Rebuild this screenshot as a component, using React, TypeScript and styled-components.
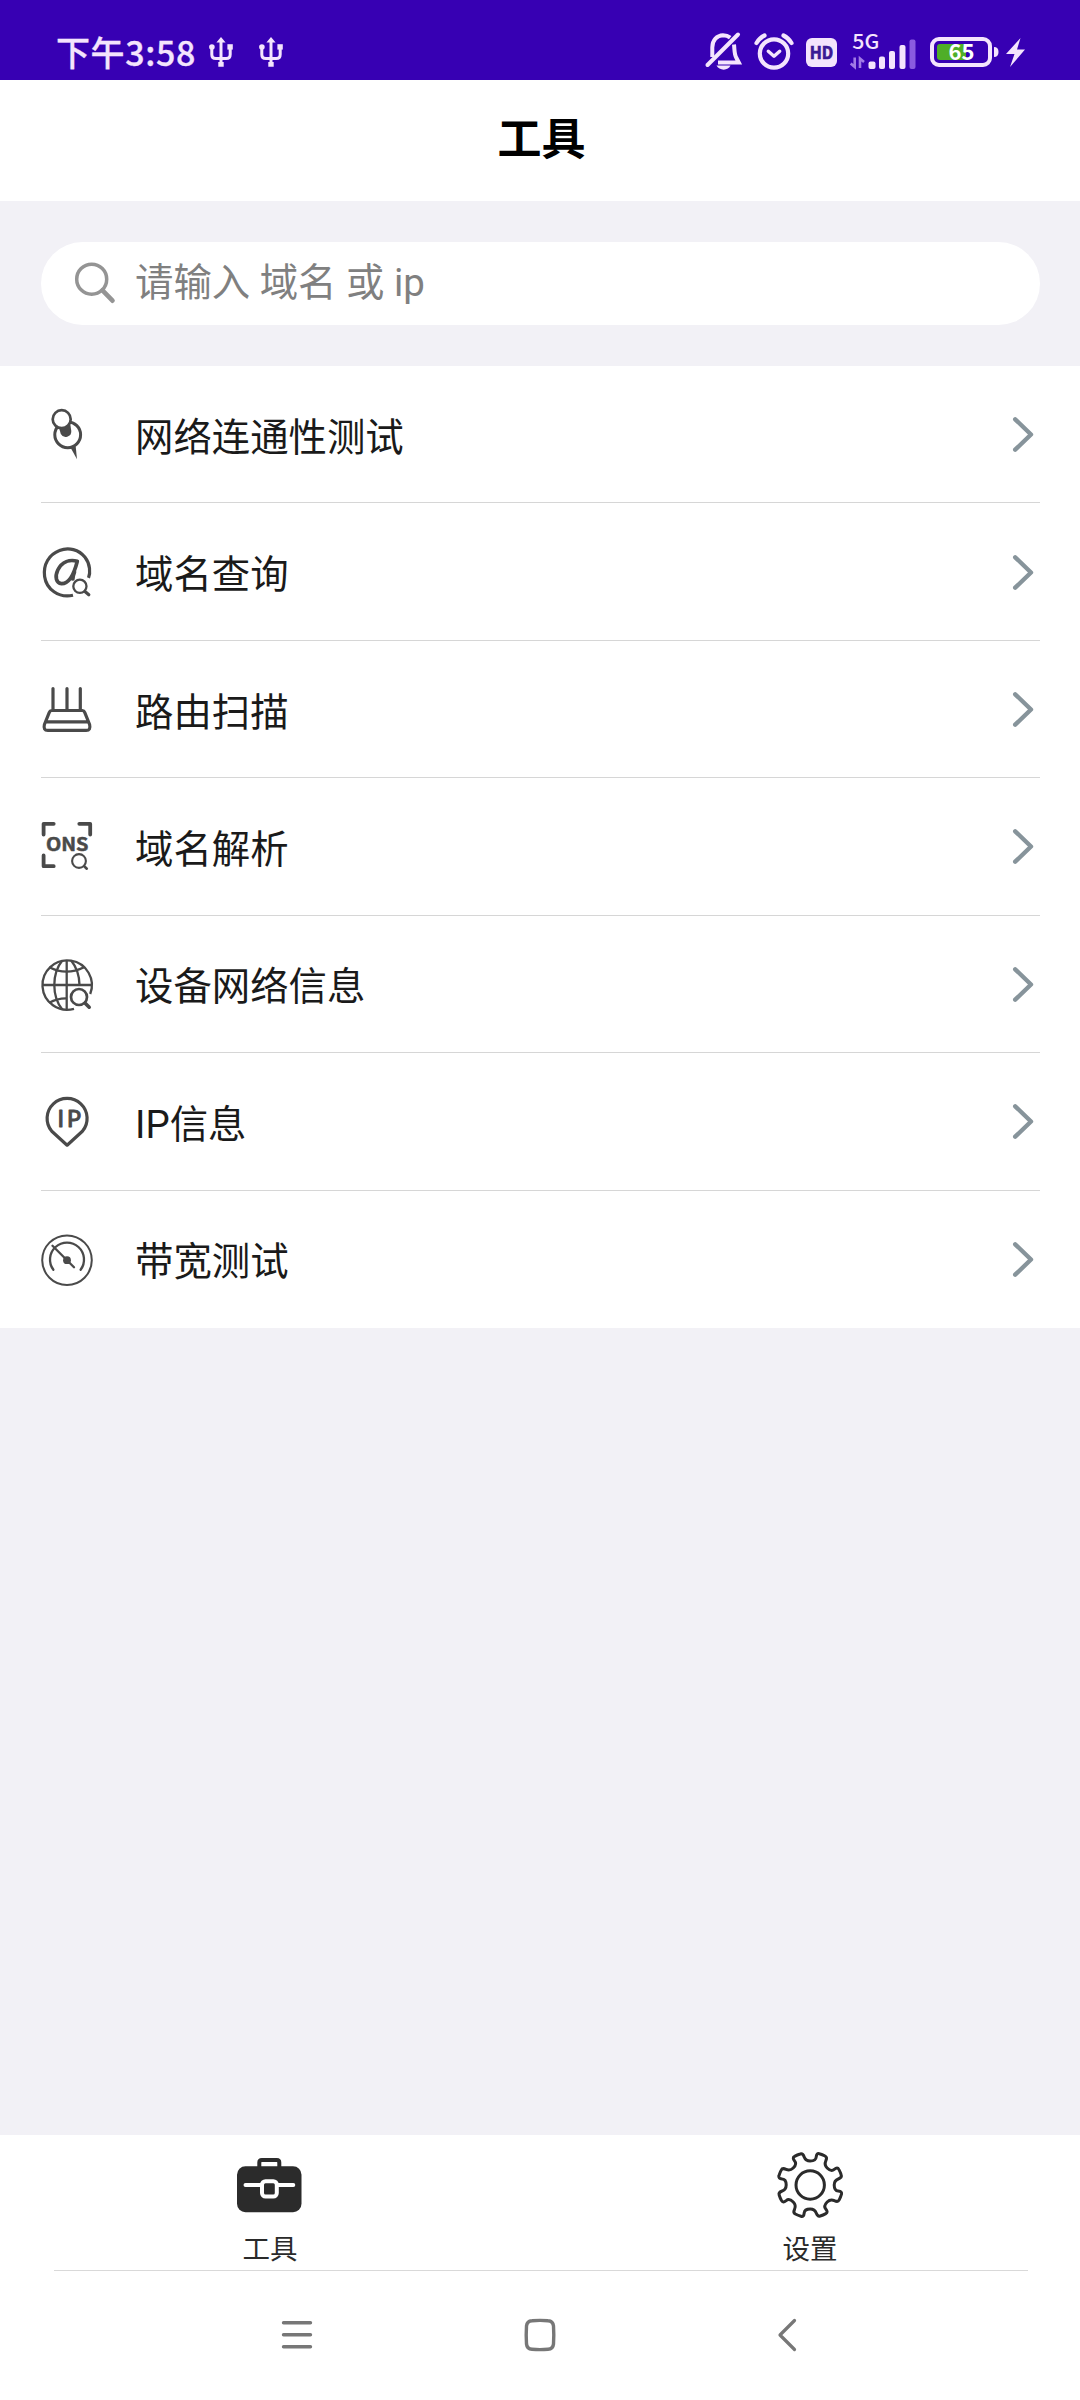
import React from "react";
import styled, { createGlobalStyle } from "styled-components";

const GlobalStyle = createGlobalStyle`
  * { box-sizing: border-box; }
  body { margin: 0; background: #f2f1f6; }
  svg { display: block; overflow: visible; flex: none; }
`;

const FONT = `"Noto Sans CJK SC", sans-serif`;
const BODY_FONT = `Roboto, "Noto Sans CJK SC", sans-serif`;
const INK = "#4a4a4a";
const STATUS_INK = "#f4e4fd";

const Screen = styled.div`
  width: 1080px;
  height: 2400px;
  display: flex;
  flex-direction: column;
  background: #f2f1f6;
  font-family: ${FONT};
  color: #1a1a1a;
`;

const StatusBar = styled.header`
  height: 80px;
  flex: none;
  display: flex;
  justify-content: space-between;
  align-items: flex-start;
  padding: 32px 55px 0 56px;
  background: #3700b3;
  color: ${STATUS_INK};
`;

const StatusGroup = styled.div`
  display: flex;
  align-items: center;
  height: 40px;
`;

const Clock = styled.span`
  font-size: 34px;
  font-weight: 500;
  line-height: 40px;
  letter-spacing: 0.6px;
  -webkit-text-stroke: 0.3px ${STATUS_INK};
  width: 153px;
  white-space: nowrap;
`;

const StatusItem = styled.span<{ $before?: number }>`
  display: block;
  margin-left: ${(p) => p.$before ?? 0}px;
`;

const TitleBar = styled.div`
  height: 121px;
  flex: none;
  display: flex;
  align-items: center;
  justify-content: center;
  padding: 0 0 9px 3px;
  background: #fff;
`;

const Title = styled.h1`
  margin: 0;
  font-size: 44px;
  font-weight: 700;
  line-height: 60px;
  color: #000;
`;

const SearchArea = styled.div`
  height: 165px;
  flex: none;
  padding: 41px 40px 0 41px;
`;

const SearchBox = styled.label`
  height: 83px;
  display: flex;
  align-items: center;
  border-radius: 42px;
  background: #fff;
  padding-left: 34px;
`;

const SearchInput = styled.input`
  flex: 1;
  height: 60px;
  margin: 0 40px 2px 20px;
  padding: 0;
  border: 0;
  outline: 0;
  background: transparent;
  font: 400 38.4px/60px ${BODY_FONT};
  color: #1a1a1a;
  &::placeholder {
    color: #808080;
    opacity: 1;
  }
`;

const List = styled.ul`
  list-style: none;
  margin: 0;
  padding: 0 40px 0 41px;
  height: 962px;
  flex: none;
  display: grid;
  grid-template-rows: repeat(7, 1fr);
  background: #fff;
`;

const Row = styled.li`
  display: flex;
  align-items: center;
  border-bottom: 1px solid #d6d6d6;
  &:last-child {
    border-bottom-color: transparent;
  }
`;

const RowLabel = styled.span`
  flex: 1;
  margin-left: 42px;
  padding-top: 7px;
  font-family: ${BODY_FONT};
  font-size: 38.4px;
  font-weight: 400;
  line-height: 56px;
`;

const Spacer = styled.div`
  flex: 1;
`;

const TabBar = styled.nav`
  height: 135px;
  flex: none;
  display: flex;
  background: #fff;
`;

const Tab = styled.button`
  flex: 1;
  display: flex;
  flex-direction: column;
  align-items: center;
  gap: 11px;
  padding: 17px 0 0;
  border: 0;
  background: none;
  font: 400 27.5px/36px ${FONT};
  color: #2a2a2a;
`;

const SystemNav = styled.div`
  height: 130px;
  flex: none;
  display: flex;
  padding: 0 52px 0 54px;
  background: #fff;
`;

const SystemNavInner = styled.div`
  flex: 1;
  display: flex;
  align-items: flex-start;
  border-top: 1px solid #d9d9d9;
  padding: 47px 0 0 225px;
`;

const NavButton = styled.span<{ $before?: number }>`
  display: block;
  margin-left: ${(p) => p.$before ?? 0}px;
`;

/* ---------- status icons ---------- */

const UsbIcon = () => (
  <svg width="24" height="30" viewBox="0 0 24 30" fill="none" stroke={STATUS_INK} strokeWidth="3">
    <path d="M12 4v22M2.8 9v8.5q0 4 4 4h10.4q4 0 4-4V9" />
    <path d="M12 0l4.6 5.5H7.4zM9.3 25h5.4v4.8H9.3z" fill={STATUS_INK} stroke="none" />
    <circle cx="2.9" cy="10" r="2.8" fill={STATUS_INK} stroke="none" />
    <path d="M18.4 7.2h5.4v5.4h-5.4z" fill={STATUS_INK} stroke="none" />
  </svg>
);

const BellOffIcon = () => (
  <svg width="36" height="38" viewBox="0 0 36 38" fill="none" stroke={STATUS_INK} strokeWidth="4">
    <path d="M6.3 24V14.5C6.3 7 11 2.6 17 2.3c3 0 5.3.8 7.2 2.3M28 11.5c.6 5 .2 9.5 2.2 13l2.6 5H12" />
    <path d="M32 1.5L1.5 32" strokeLinecap="round" />
    <path d="M10.5 32.5h14c-2 5.5-11.5 5.5-14 0z" fill={STATUS_INK} stroke="none" />
  </svg>
);

const AlarmIcon = () => (
  <svg width="40" height="38" viewBox="0 0 40 38" fill="none" stroke={STATUS_INK} strokeWidth="4.2">
    <circle cx="20" cy="20.5" r="14.2" />
    <path d="M2.5 10q3-5 8-7.5M37.5 10q-3-5-8-7.5" strokeLinecap="round" />
    <path d="M14.3 18.2l5.7 5 5.7-5" strokeWidth="3.4" strokeLinecap="round" strokeLinejoin="round" />
  </svg>
);

const HdIcon = () => (
  <svg width="31" height="29" viewBox="0 0 31 29">
    <rect width="31" height="29" rx="6" fill={STATUS_INK} />
    <text x="3.7" y="20.6" fontSize="17" fontWeight="700" textLength="23.5" lengthAdjust="spacingAndGlyphs" fill="#3a1a95" stroke="#3a1a95" strokeWidth=".7" fontFamily={FONT}>
      HD
    </text>
  </svg>
);

const SignalIcon = () => (
  <svg width="66" height="36" viewBox="0 0 66 36" fill={STATUS_INK}>
    <text x="2.3" y="15.3" fontSize="20" fontWeight="500" textLength="27" lengthAdjust="spacingAndGlyphs" fontFamily={FONT}>
      5G
    </text>
    <path d="M4.7 23.5v9.5l-4-3.5M10 34v-9.5l4 3.5" fill="none" stroke="#a27be6" strokeWidth="2.6" />
    <rect x="18.5" y="27.5" width="7" height="7.5" rx="2" />
    <rect x="29" y="22.5" width="6" height="12.5" rx="2" />
    <rect x="39" y="17" width="6" height="18" rx="2" />
    <rect x="49.5" y="11" width="6" height="24" rx="2" />
    <rect x="59.5" y="5.5" width="6" height="29.5" rx="2" fill="#8a5be0" />
  </svg>
);

const BatteryIcon = () => (
  <svg width="69" height="30" viewBox="0 0 69 30">
    <rect x="2" y="2" width="58" height="26" rx="7" fill="none" stroke={STATUS_INK} strokeWidth="4" />
    <path d="M10 7h26v16H10q-3 0-3-3V10q0-3 3-3z" fill="#4fae28" />
    <path d="M64 10q4.5 0 4.5 5T64 20z" fill={STATUS_INK} />
    <text x="18.5" y="23" fontSize="22" fontWeight="700" textLength="26" lengthAdjust="spacingAndGlyphs" fill="#fff" fontFamily={FONT}>
      65
    </text>
  </svg>
);

const BoltIcon = () => (
  <svg width="19" height="29" viewBox="0 0 19 29">
    <path d="M14.5 0L0 16h8.5L4 29l15-17.5h-8z" fill={STATUS_INK} />
  </svg>
);

/* ---------- content icons ---------- */

const SearchIcon = () => (
  <svg width="40" height="42" viewBox="0 0 40 42" fill="none" stroke="#949494">
    <circle cx="16.7" cy="16.2" r="15" strokeWidth="3.5" />
    <path d="M27.5 27.3L37.5 37.7" strokeWidth="4.6" strokeLinecap="round" />
  </svg>
);

const Glyph: React.FC<{ children: React.ReactNode }> = ({ children }) => (
  <svg width="52" height="52" viewBox="0 0 52 52" fill="none" stroke={INK} strokeWidth="3.2" strokeLinecap="round" strokeLinejoin="round">
    {children}
  </svg>
);

const PinIcon = () => (
  <Glyph>
    <circle cx="26.7" cy="26.8" r="12.9" strokeWidth="3" />
    <path d="M17.5 18L29 14.5l1.3 8.5a5.6 5.6 0 0 1-10.5 3z" fill={INK} stroke="none" />
    <circle cx="20.7" cy="11.2" r="9" fill="#fff" strokeWidth="2.7" />
    <path d="M29.5 39.5l5.2-1 1.3 12.8z" fill={INK} stroke="none" />
  </Glyph>
);

const AtIcon = () => (
  <Glyph>
    <path d="M47.5 31.8C49.5 27 49.3 18 44 11.3 38 3.5 27.5 .8 18.5 4.5 8 8.5 2 18.5 3.6 30.5 5.3 43 17.5 52.5 32 49.3" strokeLinecap="butt" />
    <path d="M36.3 15.2C29 13.3 21 15.3 16.8 24c-3.3 7-1.5 13.3 3.6 13.6 7 .3 12.2-7.8 15.900-22.400zM33.5 26q-1.8 4.500-1.600 7" strokeWidth="3.7" />
    <circle cx="38.9" cy="40.3" r="6.6" strokeWidth="2.3" />
    <path d="M44 45.5l3.8 3.2" />
  </Glyph>
);

const RouterIcon = () => (
  <Glyph>
    <path d="M12 5.5v21M26 5.5v21M39.3 5.5v21M10.7 27.5h30.6q1.7 0 2.3 1.6l5 12.4q1.4 5.9-3.4 5.9H6.8q-4.8 0-3.4-5.9l5-12.4q.6-1.6 2.3-1.6zM6 38.8h40" />
  </Glyph>
);

const DnsIcon = () => (
  <Glyph>
    <path d="M12.7 3.8H2.6v10.8M38.3 3.8h10.900v10.800M2.6 35.5v10.700h10.100" strokeWidth="3.8" />
    <text x="5" y="30.7" fontSize="18.3" fontWeight="700" textLength="42.5" lengthAdjust="spacingAndGlyphs" fill={INK} strokeWidth=".5" fontFamily={FONT}>
      ONS
    </text>
    <circle cx="38" cy="41" r="6.9" strokeWidth="2.1" />
    <path d="M43.5 46.5l2.3 2.2" strokeWidth="2.6" />
  </Glyph>
);

const GlobeIcon = () => (
  <Glyph>
    <g strokeWidth="2.3" strokeLinecap="butt">
      <path d="M49.2 36A24.7 24.7 0 1 0 33 50.8" />
      <path d="M25.7 2.3v49.4M1 27h49.5" />
      <path d="M21.3 2.5C16 9 13.3 17 13.3 27s2.7 18 8 24.5M30.1 2.5C35.5 9 38.3 17 38.5 27" />
      <path d="M8.3 9.2q17 8.8 34.8 0M8.3 44.8q7.5-4.5 16.7-4.5" />
    </g>
    <circle cx="38" cy="39" r="8" fill="#fff" strokeWidth="2.7" />
    <path d="M44.2 45.2l4 4" strokeWidth="3.6" />
  </Glyph>
);

const IpIcon = () => (
  <Glyph>
    <path d="M26.1 50.2L10.8 36.3A20 20 0 1 1 41.4 36.3z" />
    <text x="16.5" y="32.3" fontSize="23" fontWeight="500" letterSpacing="3" fill={INK} strokeWidth=".9" fontFamily="Lato, sans-serif">
      IP
    </text>
  </Glyph>
);

const GaugeIcon = () => (
  <Glyph>
    <circle cx="26" cy="27.2" r="24.8" strokeWidth="2" />
    <path d="M12.4 36.8A17 17 0 1 1 39.6 36.8" strokeWidth="2.3" />
    <path d="M11.5 12.7l21.5 21.5" strokeWidth="2.3" />
    <circle cx="26" cy="27.2" r="3.9" fill={INK} stroke="none" />
  </Glyph>
);

const ChevronIcon = () => (
  <svg width="27" height="36" viewBox="0 0 27 36" fill="none" stroke="#87949b" strokeWidth="4.4" strokeLinecap="round" strokeLinejoin="round">
    <path d="M2.2 3.3L18 18.5 2.2 33.7" />
  </svg>
);

const ToolboxIcon = () => (
  <svg width="66" height="66" viewBox="0 0 66 66" fill="none">
    <rect x="0" y="14.3" width="64.5" height="46" rx="8.5" fill="#2b2b2b" />
    <path d="M22.3 16V10.5q0-2.5 2.5-2.5h15q2.5 0 2.5 2.5V16" stroke="#2b2b2b" strokeWidth="4" />
    <path d="M8.5 33H25M40 33h16.3" stroke="#fff" strokeWidth="4" strokeLinecap="round" />
    <rect x="25" y="29.2" width="14.8" height="15.3" rx="3.5" fill="#2b2b2b" stroke="#fff" strokeWidth="4" />
  </svg>
);

/** One eighth of the cog outline, repeated around the centre. */
const COG_POINTS: [number, number][][] = [
  [[3.5, -24], [5.8, -25.5], [6, -28]],
  [[6.3, -30.8], [7.3, -31.9], [9.2, -31.3]],
  [[11.3, -30.7], [13.2, -29.9], [14.9, -29]],
  [[16.7, -28.1], [16.6, -26.2], [15.6, -24.1]],
  [[14.5, -21.7], [14.5, -19.5], [16.97, -16.97]],
];

const cogPath = () => {
  let d = "M33.2 9";
  for (let i = 0; i < 8; i++) {
    const a = (i * Math.PI) / 4;
    for (const curve of COG_POINTS) {
      const pts = curve.map(([x, y]) => {
        const px = 33.2 + x * Math.cos(a) - y * Math.sin(a);
        const py = 33 + x * Math.sin(a) + y * Math.cos(a);
        return `${px.toFixed(2)} ${py.toFixed(2)}`;
      });
      d += `C${pts.join(" ")}`;
    }
  }
  return d + "z";
};

const CogIcon = () => (
  <svg width="66" height="66" viewBox="0 0 66 66" fill="none" stroke="#2b2b2b" strokeWidth="3" strokeLinejoin="round">
    <path d={cogPath()} />
    <circle cx="33.2" cy="33" r="14.2" />
  </svg>
);

const MenuIcon = () => (
  <svg width="32" height="34" viewBox="0 0 32 34" stroke="#777" strokeWidth="3.4" strokeLinecap="round">
    <path d="M4.5 4.7H31.5M4.5 16.7H31.5M4.5 28.7H31.5" />
  </svg>
);

const HomeIcon = () => (
  <svg width="32" height="34" viewBox="0 0 32 34" fill="none" stroke="#777" strokeWidth="3.4">
    <path d="M8 2.7Q16 2 24 2.7 29 3 29.5 8q.6 9 0 18-.5 5-5.5 5.3-8 .7-16 0Q3 31 2.5 26q-.6-9 0-18Q3 3 8 2.7z" />
  </svg>
);

const BackIcon = () => (
  <svg width="20" height="34" viewBox="0 0 20 34" fill="none" stroke="#777" strokeWidth="3.2" strokeLinecap="round" strokeLinejoin="round">
    <path d="M17.5 2.5L3 17l14.5 14.5" />
  </svg>
);

const TOOLS: { label: string; Icon: React.FC }[] = [
  { label: "网络连通性测试", Icon: PinIcon },
  { label: "域名查询", Icon: AtIcon },
  { label: "路由扫描", Icon: RouterIcon },
  { label: "域名解析", Icon: DnsIcon },
  { label: "设备网络信息", Icon: GlobeIcon },
  { label: "IP信息", Icon: IpIcon },
  { label: "带宽测试", Icon: GaugeIcon },
];

export default function App() {
  return (
    <Screen>
      <GlobalStyle />
      <StatusBar>
        <StatusGroup>
          <Clock>下午3:58</Clock>
          <StatusItem><UsbIcon /></StatusItem>
          <StatusItem $before={26}><UsbIcon /></StatusItem>
        </StatusGroup>
        <StatusGroup>
          <StatusItem><BellOffIcon /></StatusItem>
          <StatusItem $before={12}><AlarmIcon /></StatusItem>
          <StatusItem $before={12}><HdIcon /></StatusItem>
          <StatusItem $before={13}><SignalIcon /></StatusItem>
          <StatusItem $before={14}><BatteryIcon /></StatusItem>
          <StatusItem $before={7}><BoltIcon /></StatusItem>
        </StatusGroup>
      </StatusBar>
      <TitleBar>
        <Title>工具</Title>
      </TitleBar>
      <SearchArea>
        <SearchBox>
          <SearchIcon />
          <SearchInput placeholder="请输入 域名 或 ip" />
        </SearchBox>
      </SearchArea>
      <List>
        {TOOLS.map(({ label, Icon }) => (
          <Row key={label}>
            <Icon />
            <RowLabel>{label}</RowLabel>
            <ChevronIcon />
          </Row>
        ))}
      </List>
      <Spacer />
      <TabBar>
        <Tab>
          <ToolboxIcon />
          工具
        </Tab>
        <Tab>
          <CogIcon />
          设置
        </Tab>
      </TabBar>
      <SystemNav>
        <SystemNavInner>
          <NavButton><MenuIcon /></NavButton>
          <NavButton $before={213}><HomeIcon /></NavButton>
          <NavButton $before={221}><BackIcon /></NavButton>
        </SystemNavInner>
      </SystemNav>
    </Screen>
  );
}
